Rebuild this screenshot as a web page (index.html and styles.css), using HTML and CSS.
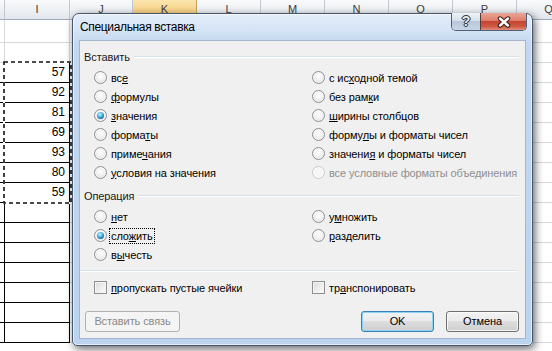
FILE: index.html
```html
<!DOCTYPE html>
<html lang="ru">
<head>
<meta charset="utf-8">
<title>Специальная вставка</title>
<link rel="stylesheet" href="styles.css">
</head>
<body>
<div class="screen">
  <div class="sheet">
    <div class="row hdr">
      <div class="cell ch">H</div><div class="cell ci">I</div><div class="cell cj">J</div><div class="cell cx on">K</div><div class="cell cx">L</div><div class="cell cx">M</div><div class="cell cx">N</div><div class="cell cx">O</div><div class="cell cx">P</div><div class="cell cx">Q</div>
    </div>
    <div class="row first"><div class="cell ch"></div><div class="cell ci"></div><div class="cell rest"></div></div>
    <div class="row"><div class="cell ch"></div><div class="cell ci"></div><div class="cell rest"></div></div>
    <div class="row"><div class="cell ch bk">38</div><div class="cell ci bk">57</div><div class="cell rest"></div></div>
    <div class="row"><div class="cell ch bk">65</div><div class="cell ci bk">92</div><div class="cell rest"></div></div>
    <div class="row"><div class="cell ch bk">74</div><div class="cell ci bk">81</div><div class="cell rest"></div></div>
    <div class="row"><div class="cell ch bk">47</div><div class="cell ci bk">69</div><div class="cell rest"></div></div>
    <div class="row"><div class="cell ch bk">60</div><div class="cell ci bk">93</div><div class="cell rest"></div></div>
    <div class="row"><div class="cell ch bk">58</div><div class="cell ci bk">80</div><div class="cell rest"></div></div>
    <div class="row"><div class="cell ch bk">44</div><div class="cell ci bk">59</div><div class="cell rest"></div></div>
    <div class="row"><div class="cell ch bk"></div><div class="cell ci bk"></div><div class="cell rest"></div></div>
    <div class="row"><div class="cell ch bk"></div><div class="cell ci bk"></div><div class="cell rest"></div></div>
    <div class="row"><div class="cell ch bk"></div><div class="cell ci bk"></div><div class="cell rest"></div></div>
    <div class="row"><div class="cell ch bk"></div><div class="cell ci bk"></div><div class="cell rest"></div></div>
    <div class="row"><div class="cell ch bk"></div><div class="cell ci bk"></div><div class="cell rest"></div></div>
    <div class="row"><div class="cell ch bk"></div><div class="cell ci bk"></div><div class="cell rest"></div></div>
    <div class="row"><div class="cell ch bk"></div><div class="cell ci bk"></div><div class="cell rest"></div></div>
  </div>

  <svg class="ants" width="70" height="144" viewBox="0 0 70 144">
    <rect x="1" y="1" width="67" height="141" fill="none" stroke="#fff" stroke-width="2"/>
    <rect x="1" y="1" width="67" height="141" fill="none" stroke="#111" stroke-width="1.6" stroke-dasharray="4 3"/>
  </svg>

  <div class="dialog">
    <div class="titlebar">
      <div class="title">Специальная вставка</div>
      <div class="capbtns">
        <div class="cap help">?</div>
        <div class="cap close">
          <svg width="14" height="12" viewBox="0 0 14 12">
            <path d="M3 2.5 L11 9.5 M11 2.5 L3 9.5" stroke="#3a1c16" stroke-width="4.4" stroke-linecap="round"/>
            <path d="M3 2.5 L11 9.5 M11 2.5 L3 9.5" stroke="#fff" stroke-width="2.4" stroke-linecap="round"/>
          </svg>
        </div>
      </div>
    </div>
    <div class="client">
      <div class="group-h">Вставить</div>
      <div class="opts six">
        <div class="opt"><span class="radio"></span><span>вс<u>е</u></span></div>
        <div class="opt"><span class="radio"></span><span><u>ф</u>ормулы</span></div>
        <div class="opt"><span class="radio on"></span><span><u>з</u>начения</span></div>
        <div class="opt"><span class="radio"></span><span>форма<u>т</u>ы</span></div>
        <div class="opt"><span class="radio"></span><span>приме<u>ч</u>ания</span></div>
        <div class="opt"><span class="radio"></span><span><u>у</u>словия на значения</span></div>
        <div class="opt"><span class="radio"></span><span>с ис<u>х</u>одной темой</span></div>
        <div class="opt"><span class="radio"></span><span>без рам<u>к</u>и</span></div>
        <div class="opt"><span class="radio"></span><span><u>ш</u>ирины столбцов</span></div>
        <div class="opt"><span class="radio"></span><span>форму<u>л</u>ы и форматы чисел</span></div>
        <div class="opt"><span class="radio"></span><span>значени<u>я</u> и форматы чисел</span></div>
        <div class="opt off"><span class="radio"></span><span>все условные форматы объединения</span></div>
      </div>
      <div class="group-h second">Операция</div>
      <div class="opts three">
        <div class="opt"><span class="radio"></span><span><u>н</u>ет</span></div>
        <div class="opt"><span class="radio on"></span><span class="focus">сло<u>ж</u>ить</span></div>
        <div class="opt"><span class="radio"></span><span>в<u>ы</u>честь</span></div>
        <div class="opt"><span class="radio"></span><span>у<u>м</u>ножить</span></div>
        <div class="opt"><span class="radio"></span><span><u>р</u>азделить</span></div>
      </div>
      <div class="sep"></div>
      <div class="checks">
        <div class="opt"><span class="check"></span><span><u>п</u>ропускать пустые ячейки</span></div>
        <div class="opt"><span class="check"></span><span>тр<u>а</u>нспонировать</span></div>
      </div>
      <div class="btns">
        <div class="btn link">Вставить связь</div>
        <div class="spacer"></div>
        <div class="btn ok">OK</div>
        <div class="btn">Отмена</div>
      </div>
    </div>
  </div>
</div>
</body>
</html>
```

FILE: styles.css
```css
html, body {
  margin: 0;
  padding: 0;
  width: 552px;
  height: 351px;
  overflow: hidden;
  background: #fff;
}

.screen {
  position: relative;
  width: 552px;
  height: 351px;
  overflow: hidden;
  font-family: "Liberation Sans", Arial, sans-serif;
  color: #000;
}

/* ---------- spreadsheet ---------- */
.sheet {
  margin-left: -59px;
}

.row {
  display: flex;
  height: 20px;
}

.row.first {
  height: 23px;
}

.cell {
  box-sizing: border-box;
  flex: none;
  border-right: 1px solid #d6d8dc;
  border-bottom: 1px solid #d6d8dc;
  font-size: 12px;
  line-height: 19px;
  text-align: right;
  padding-right: 4px;
  overflow: hidden;
  white-space: nowrap;
}

.ch { width: 64px; }
.ci { width: 65px; }
.cj { width: 63px; }
.cx { width: 64px; }
.rest { flex: 1; border-right: none; }

.cell.bk {
  border-right-color: #000;
  border-bottom-color: #000;
}

.hdr .cell {
  background: linear-gradient(#f9fafb, #e3e7ed);
  border-right-color: #c3c9d1;
  border-bottom-color: #9eaabb;
  text-align: center;
  padding: 0;
  font-size: 11px;
  color: #3c3c3c;
}

.hdr .cell.on {
  background: linear-gradient(#fbe5ae, #f3c66a);
  border-right-color: #c5a35b;
  border-bottom-color: #c29b49;
}

.ants {
  position: absolute;
  left: 3px;
  top: 61px;
}

/* ---------- dialog ---------- */
.dialog {
  position: absolute;
  left: 72px;
  top: 13px;
  width: 461px;
  height: 333px;
  box-sizing: border-box;
  border: 1px solid #44576e;
  border-radius: 7px 7px 5px 5px;
  background: linear-gradient(#e5eef9 0, #d4e3f5 5%, #c3d8f0 9%, #bcd3ed 100%);
  box-shadow: 2px 3px 8px rgba(0, 0, 0, 0.6), inset 0 0 0 1px rgba(255, 255, 255, 0.6);
  display: flex;
  flex-direction: column;
}

.titlebar {
  height: 26px;
  display: flex;
  align-items: flex-start;
  padding-left: 7px;
}

.title {
  flex: 1;
  font-size: 12px;
  letter-spacing: -0.35px;
  line-height: 27px;
  color: #000;
}

.capbtns {
  display: flex;
  margin-top: -1px;
  margin-right: 5px;
  height: 17px;
  border: 1px solid #4f6178;
  border-top: none;
  border-radius: 0 0 5px 5px;
  overflow: hidden;
}

.cap {
  display: flex;
  align-items: center;
  justify-content: center;
}

.help {
  width: 28px;
  background: linear-gradient(#eef2f7 0, #d6dfea 45%, #b9c7d9 50%, #c8d5e5 100%);
  font-weight: bold;
  font-size: 14px;
  line-height: 17px;
  color: #e9edf2;
  text-shadow: 0 0 1px #1d2a38, 0 0 1px #1d2a38, 0 0 1px #1d2a38, 1px 0 0 #33414f, -1px 0 0 #33414f, 0 1px 0 #33414f, 0 -1px 0 #33414f;
}

.close {
  width: 45px;
  border-left: 1px solid #5a3a36;
  background: linear-gradient(#eaa697 0, #dd7e6b 45%, #c5442f 50%, #cf5b45 80%, #e0907c 100%);
}

.client {
  flex: 1;
  margin: 0 6px 6px;
  box-sizing: border-box;
  border: 1px solid #a3b6cd;
  background: #f0f0f0;
  padding: 8px 6px 0 4px;
  font-size: 11px;
  letter-spacing: -0.1px;
}

.group-h {
  display: flex;
  align-items: center;
  gap: 4px;
  height: 16px;
  color: #1a1a1a;
}

.group-h::after {
  content: "";
  flex: 1;
  border-top: 1px solid #d5dfe5;
  border-bottom: 1px solid #fff;
}

.group-h.second {
  margin-top: 6px;
}

.opts {
  display: grid;
  grid-auto-flow: column;
  grid-template-columns: 218px 1fr;
  padding-left: 10px;
  margin-top: 3px;
}

.opts.six { grid-template-rows: repeat(6, 19px); }
.opts.three { grid-template-rows: repeat(3, 19px); }

.opt {
  display: flex;
  align-items: center;
  gap: 4px;
  white-space: nowrap;
  height: 19px;
}

.opt u {
  text-decoration: underline;
  text-underline-offset: 1px;
}

.radio {
  position: relative;
  flex: none;
  width: 13px;
  height: 13px;
  box-sizing: border-box;
  border-radius: 50%;
  border: 1px solid #8e9092;
  background: radial-gradient(circle at 50% 40%, #ffffff 0, #f1f1f1 45%, #d4d4d4 100%);
  box-shadow: inset 0 0 0 1px rgba(255, 255, 255, 0.6);
}

.radio.on::after {
  content: "";
  position: absolute;
  left: 2px;
  top: 2px;
  width: 7px;
  height: 7px;
  border-radius: 50%;
  background: radial-gradient(circle at 42% 35%, #d2f4ff 0, #5cc0ee 35%, #1d6fa6 70%, #14436b 100%);
}

.opt.off {
  color: #8f8f8f;
}

.opt.off .radio {
  border-color: #c9c9c9;
  background: #f6f6f6;
}

.focus {
  outline: 1px dotted #000;
  outline-offset: 1px;
}

.sep {
  margin: 6px 3px 0 -4px;
  border-top: 1px solid #d5dfe5;
  border-bottom: 1px solid #fff;
}

.checks {
  display: grid;
  grid-template-columns: 218px 1fr;
  padding-left: 10px;
  margin-top: 6px;
}

.check {
  flex: none;
  width: 13px;
  height: 13px;
  box-sizing: border-box;
  border: 1px solid #8e9092;
  background: linear-gradient(135deg, #d9d9d9 0, #f0f0f0 60%, #fdfdfd 100%);
  box-shadow: inset 0 0 0 1px #f4f4f4;
}

.btns {
  display: flex;
  gap: 12px;
  margin-top: 14px;
  height: 21px;
}

.spacer {
  flex: 1;
}

.btn {
  box-sizing: border-box;
  width: 73px;
  height: 21px;
  border: 1px solid #707070;
  border-radius: 3px;
  background: linear-gradient(#f2f2f2 0, #ebebeb 49%, #dddddd 50%, #cfcfcf 100%);
  box-shadow: inset 0 0 0 1px rgba(255, 255, 255, 0.75);
  text-align: center;
  line-height: 19px;
  color: #000;
}

.btn.link {
  width: 95px;
  margin-left: 1px;
  border-color: #adb2b5;
  background: #f4f4f4;
  box-shadow: none;
  color: #8a8a8a;
}

.btn.ok {
  border-color: #3c7fb1;
  box-shadow: inset 0 0 0 1px #8fd4f7;
}
```
